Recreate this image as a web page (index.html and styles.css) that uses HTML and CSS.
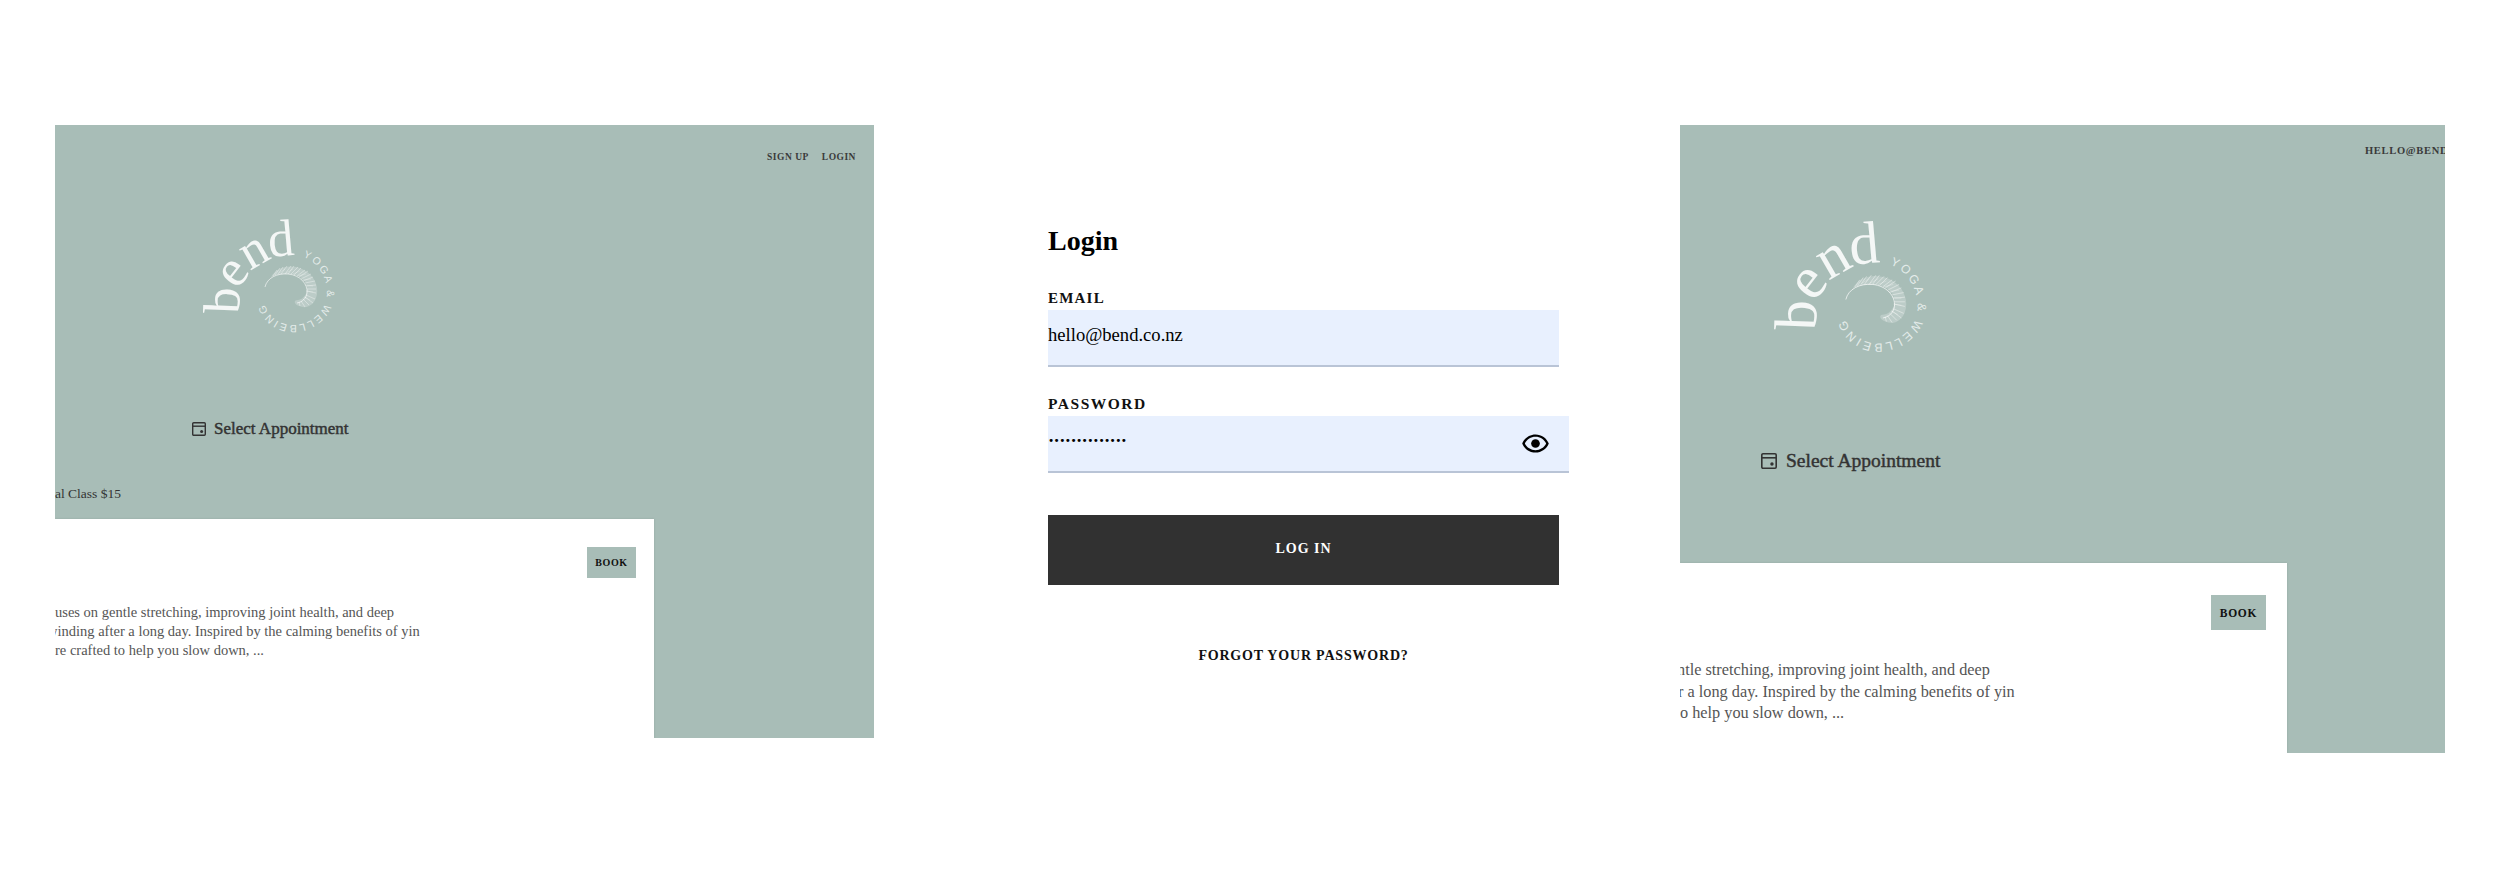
FILE: index.html
```html
<!DOCTYPE html>
<html lang="en">
<head>
<meta charset="utf-8">
<title>Bend Yoga &amp; Wellbeing</title>
<link rel="stylesheet" href="styles.css">
</head>
<body>
<main class="page">
  <section class="panel panel-a">
    <nav class="nav nav-a"><a>SIGN UP</a><a>LOGIN</a></nav>
    <svg class="logo logo-a" viewBox="0 0 132 115" aria-label="bend yoga and wellbeing">
      <defs>
        <path id="tagArc" d="M100 37 C114 41 124 57 124 73 C124 91 108 105 90 105 C74 105 62 93 61 79"/>
      </defs>
      <g id="logoArt">
        <text class="logo-word" x="36 34 47 66.3" y="94 70 50.7 37" rotate="-88 -52 -30 -5">bend</text>
        <text class="logo-tag" textLength="135"><textPath href="#tagArc">YOGA &amp; WELLBEING</textPath></text>
        <g class="feather">
          <path class="feather-body" d="M68 57 C74 47 87 44 99 49 C111 54 117 67 113 78 C110 86 103 89 96 86 C91 84 90 80 95 80 C101 79 105 73 104 66 C102 58 94 54 85 54 C78 54 72 55 68 57Z"/>
          <path class="feather-barbs" d="M70 56 L74 50 M72 55 L77 48 M75 54 L80 47 M78 54 L84 46 M82 54 L88 46 M85 54 L91 46 M88 54 L95 47 M91 55 L98 48 M94 56 L102 50 M96 57 L105 51 M98 59 L108 54 M100 61 L110 57 M102 63 L112 61 M103 66 L113 65 M104 69 L113 69 M104 71 L113 73 M103 75 L112 79 M102 77 L110 83 M100 79 L106 85 M98 81 L102 87 M96 82 L97 86"/>
          <path class="feather-barbs-fine" d="M76 53 L82 49 M83 53 L90 49 M90 54 L97 51 M95 56 L103 54 M99 60 L108 59 M102 65 L110 66 M103 71 L110 72 M101 77 L107 80"/>
        </g>
        <path class="feather-quill" d="M62 67 C64 58 74 53 85 54 C97 55 105 64 104 73 C103 79 99 82 94 83"/>
      </g>
    </svg>
    <div class="appt appt-a">
      <svg class="cal" viewBox="0 0 14 14"><rect x=".7" y=".7" width="12.6" height="12.6" rx="1"/><path d="M.7 4.2H13.3"/><circle cx="9.6" cy="9.6" r="1.5"/></svg>
      <span>Select Appointment</span>
    </div>
    <p class="price">al Class $15</p>
    <div class="card card-a">
      <button class="book book-a">BOOK</button>
      <p class="desc desc-a">
        <span class="line">uses on gentle stretching, improving joint health, and deep</span>
        <span class="line a2">winding after a long day. Inspired by the calming benefits of yin</span>
        <span class="line">re crafted to help you slow down, ...</span>
      </p>
    </div>
  </section>

  <section class="login">
    <h1 class="login-title">Login</h1>
    <label class="field-label label-email" for="email">EMAIL</label>
    <input class="field field-email" id="email" type="text" value="hello@bend.co.nz" readonly>
    <label class="field-label label-pass" for="pass">PASSWORD</label>
    <div class="pass-wrap">
      <input class="field field-pass" id="pass" type="text" value="··············" readonly>
      <svg class="eye" viewBox="0 0 24 24"><path d="M12 4.5C7 4.5 2.73 7.61 1 12c1.73 4.39 6 7.5 11 7.5s9.27-3.11 11-7.5c-1.73-4.39-6-7.5-11-7.5zm0 2c3.79 0 7.17 2.13 8.82 5.5-1.65 3.37-5.03 5.5-8.82 5.5S4.83 15.37 3.18 12C4.83 8.63 8.21 6.5 12 6.5z"/><circle cx="12" cy="12" r="3.6"/></svg>
    </div>
    <button class="submit">LOG IN</button>
    <a class="forgot">FORGOT YOUR PASSWORD?</a>
  </section>

  <section class="panel panel-b">
    <nav class="nav nav-b"><a>HELLO@BEND.CO.NZ</a></nav>
    <svg class="logo logo-b" viewBox="0 0 132 115" aria-hidden="true"><use href="#logoArt"/></svg>
    <div class="appt appt-b">
      <svg class="cal" viewBox="0 0 14 14"><rect x=".7" y=".7" width="12.6" height="12.6" rx="1"/><path d="M.7 4.2H13.3"/><circle cx="9.6" cy="9.6" r="1.5"/></svg>
      <span>Select Appointment</span>
    </div>
    <div class="card card-b">
      <button class="book book-b">BOOK</button>
      <p class="desc desc-b">
        <span class="line b1">ntle stretching, improving joint health, and deep</span>
        <span class="line b2">r a long day. Inspired by the calming benefits of yin</span>
        <span class="line">o help you slow down, ...</span>
      </p>
    </div>
  </section>
</main>
</body>
</html>
```
FILE: styles.css
```css
* { box-sizing: border-box; }
html, body { margin: 0; height: 100%; background: #fff; overflow: hidden; }
body { font-family: "Liberation Serif", "Times New Roman", serif; color: #000; }

.page { display: flex; align-items: flex-start; padding: 125px 55px 0 55px; }

.panel { display: flex; flex-direction: column; flex: none; overflow: hidden; background: #a8bdb7; }
.panel-a { width: 819px; height: 613px; }
.panel-b { width: 765px; height: 628px; margin-left: auto; }

.nav { display: flex; white-space: nowrap; color: #3a3a3a; font-weight: 700; }
.nav-a { justify-content: flex-end; gap: 13px; padding: 26px 18px 0 0; font-size: 9.5px; line-height: 12px; letter-spacing: .5px; }
.nav-b { padding: 20px 0 0 685px; font-size: 10.5px; line-height: 12px; letter-spacing: .7px; }

.logo { display: block; flex: none; overflow: visible; }
.logo-a { width: 132px; height: 115px; margin: 57px 0 0 148px; }
.logo-b { width: 153px; height: 133px; margin: 65px 0 0 94px; }
.logo-word { font-family: "Liberation Serif", serif; font-size: 52px; fill: #f4f7f6; }
.logo-tag { font-family: "Liberation Sans", sans-serif; font-size: 10.5px; fill: #e4ecea; }
.feather { filter: blur(.25px); }
.feather-body { fill: #fff; opacity: .24; }
.feather-quill { fill: none; stroke: #fff; stroke-width: .7; opacity: .85; }
.feather-barbs { fill: none; stroke: #fff; stroke-width: .6; opacity: .6; }
.feather-barbs-fine { fill: none; stroke: #fff; stroke-width: .4; opacity: .5; }

.appt { display: flex; align-items: center; color: #333; -webkit-text-stroke: .45px #333; }
.appt-a { gap: 8px; margin: 84px 0 0 137px; font-size: 17px; line-height: 20px; }
.appt-b { gap: 9px; margin: 95px 0 0 81px; font-size: 19.5px; line-height: 22px; }
.cal { flex: none; fill: none; stroke: #333; stroke-width: 1.4; }
.cal circle { fill: #333; stroke: none; }
.appt-a .cal { width: 14px; height: 14px; }
.appt-b .cal { width: 16px; height: 16px; }

.price { margin: 47px 0 0; font-size: 13.5px; line-height: 16px; color: #333; white-space: nowrap; }

.card { display: flex; flex-direction: column; background: #fff; box-shadow: 0 0 2px rgba(60, 80, 75, .18); }
.card-a { height: 219px; margin: 17px 220px 0 0; }
.card-b { height: 190px; margin: 91px 158px 0 0; }

.book { align-self: flex-end; padding: 0; border: 0; background: #a8bdb7; color: #111; font-family: inherit; font-weight: 700; }
.book-a { width: 49px; height: 31px; margin: 28px 18px 0 0; font-size: 10px; letter-spacing: .6px; }
.book-b { width: 55px; height: 35px; margin: 32px 21px 0 0; font-size: 11.5px; letter-spacing: .7px; }

.desc { margin: 0; color: #555; white-space: nowrap; }
.line { display: block; }
.a2 { margin-left: -8px; }
.b1 { margin-left: -3px; }
.b2 { margin-left: -2px; }
.desc-a { margin-top: 25px; font-size: 14.5px; line-height: 19px; }
.desc-b { margin-top: 29px; font-size: 16.3px; line-height: 21.5px; }

.login { display: flex; flex-direction: column; align-items: flex-start; flex: none; width: 521px; margin-left: 174px; }
.login-title { margin: 99px 0 0; font-size: 28px; line-height: 34px; font-weight: 700; }
.field-label { display: block; font-size: 15px; font-weight: 700; line-height: 18px; letter-spacing: 1.2px; color: #111; }
.label-email { margin-top: 31px; }
.label-pass { margin-top: 28px; font-size: 15.5px; letter-spacing: 1.5px; }
.field { display: block; height: 57px; padding: 0 0 6px; border: 0; border-bottom: 2px solid #b9c4d6; border-radius: 0; outline: 0; background: #e8f0fe; font-family: inherit; font-size: 18.6px; color: #000; }
.field-email { width: 511px; margin-top: 3px; }
.pass-wrap { position: relative; width: 521px; margin-top: 3px; }
.field-pass { width: 100%; letter-spacing: -.6px; font-weight: 700; }
.eye { position: absolute; top: 13px; left: 473px; width: 29px; height: 29px; fill: #000; }
.submit { width: 511px; height: 70px; margin-top: 42px; padding: 0 0 2px; border: 0; background: #313131; color: #fff; font-family: inherit; font-size: 14px; font-weight: 700; letter-spacing: 1px; }
.forgot { align-self: flex-start; width: 511px; margin-top: 62px; text-align: center; font-size: 14px; line-height: 18px; font-weight: 700; letter-spacing: .8px; color: #111; }
```
